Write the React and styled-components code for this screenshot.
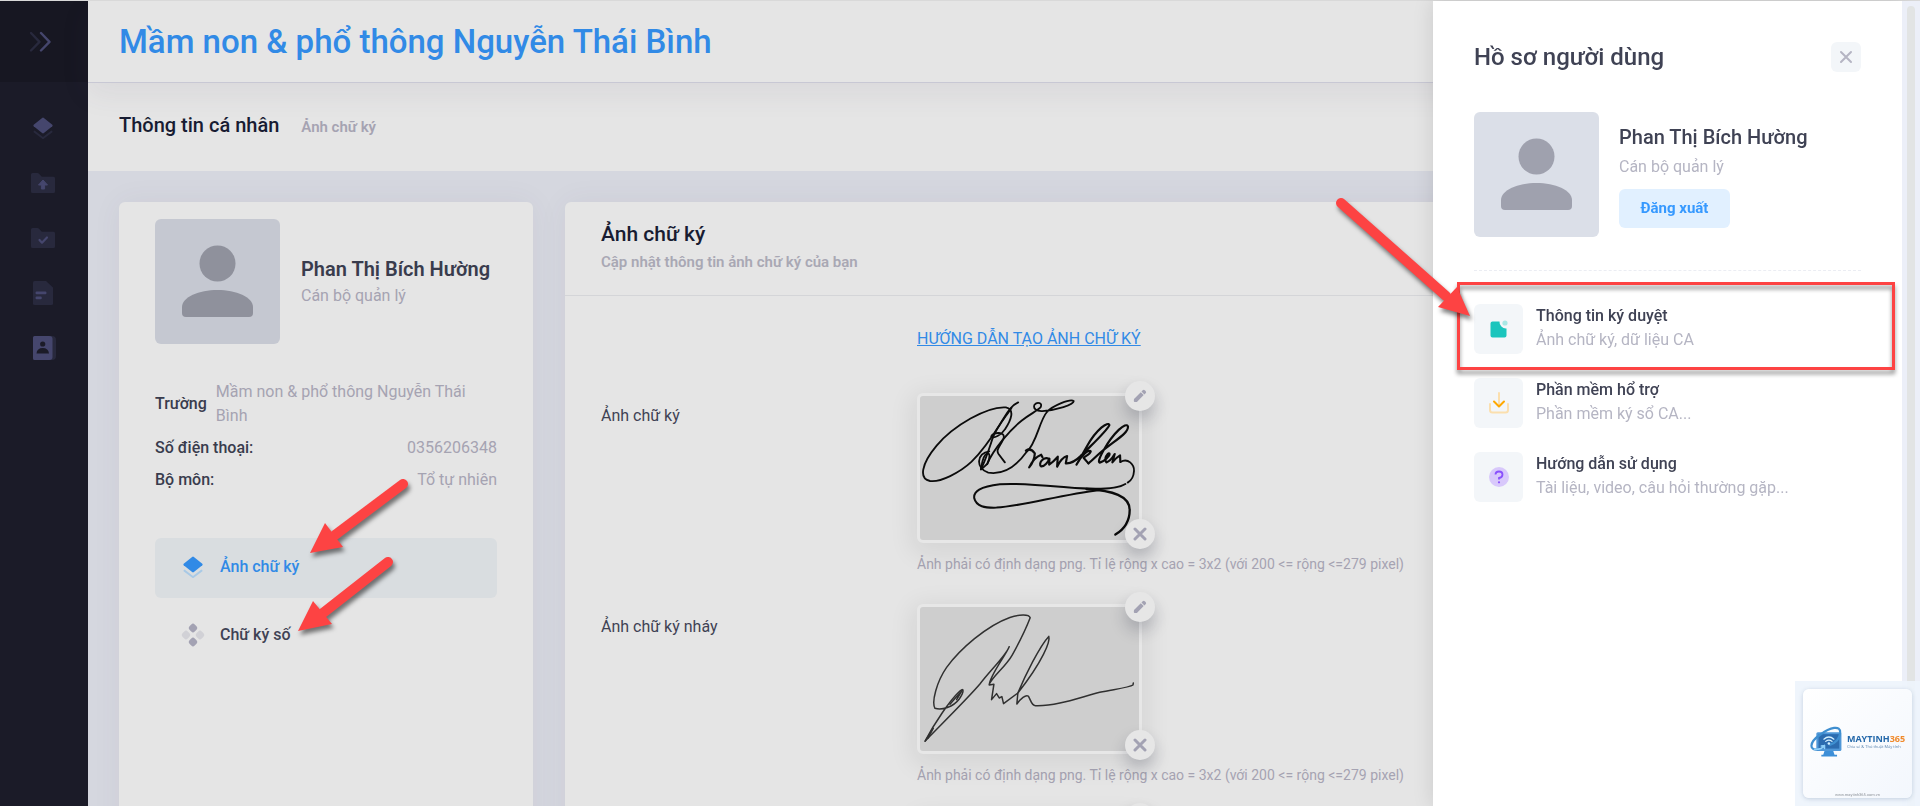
import React from "react";
import styled, { createGlobalStyle } from "styled-components";

const GlobalStyle = createGlobalStyle`
  *, *::before, *::after { box-sizing: border-box; }
  body {
    margin: 0;
    font-family: Roboto, "Liberation Sans", sans-serif;
    font-size: 16px;
    line-height: 24px;
    color: #3f4254;
    background: #d5d7df;
  }
  h1, h2, h3, p, dl, dd, ul { margin: 0; padding: 0; }
  button { border: 0; padding: 0; font: inherit; cursor: pointer; }
  a { color: inherit; text-decoration: none; }
  svg { display: block; }
`;

const Shell = styled.div`
  display: grid;
  grid-template-columns: 88px 1fr;
  height: 100vh;
  overflow: hidden;
  border-top: 1px solid #d9d9d9;
`;

/* Side bar */
const Rail = styled.aside`
  background: #1b1b28;
`;
const RailBrand = styled.div`
  display: flex;
  align-items: center;
  justify-content: center;
  height: 81px;
  background: #171722;
`;
const RailToggle = styled.button`
  padding-right: 8px;
  background: transparent;
`;
const RailNav = styled.nav`
  display: flex;
  flex-direction: column;
  padding: 18px 2px 0 0;
`;
const RailLink = styled.a`
  display: flex;
  align-items: center;
  justify-content: center;
  height: 55px;
`;

/* Main column */
const Main = styled.main`
  display: flex;
  flex-direction: column;
  min-width: 0;
`;
const TopBar = styled.header`
  position: relative;
  display: flex;
  align-items: center;
  flex: none;
  height: 82px;
  padding: 0 31px;
  background: #e5e5e5;
  border-bottom: 1px solid #c8c8d4;
  box-shadow: 0 10px 30px rgba(82, 63, 105, 0.08);
`;
const SchoolName = styled.h1`
  font-size: 33px;
  line-height: 40px;
  font-weight: 500;
  color: #318ae6;
`;
const SubBar = styled.div`
  display: flex;
  align-items: center;
  flex: none;
  gap: 22px;
  height: 88px;
  padding: 0 31px 4px;
  background: #e5e5e5;
`;
const PageTitle = styled.h2`
  font-size: 20px;
  font-weight: 500;
  color: #181c32;
`;
const Crumb = styled.a`
  padding-top: 3px;
  font-size: 15px;
  font-weight: 600;
  color: #a5a3b2;
`;
const Content = styled.div`
  display: flex;
  flex: 1;
  gap: 32px;
  min-height: 0;
  padding: 31px 31px 0;
`;
const Card = styled.section`
  flex: ${(p) => (p.$wide ? "1" : "0 0 414px")};
  background: #e5e5e5;
  border-radius: 6px 6px 0 0;
  box-shadow: 0 0 30px rgba(82, 63, 105, 0.06);
`;

/* Profile card */
const ProfileBody = styled.div`
  padding: 17px 36px;
`;
const PersonRow = styled.div`
  display: flex;
  align-items: center;
  gap: 21px;
`;
const PersonText = styled.div`
  padding-bottom: 2px;
`;
const AvatarBox = styled.div`
  flex: none;
  width: 125px;
  height: 125px;
  border-radius: 6px;
  background: ${(p) => (p.$dim ? "#c5c8d1" : "#dbdfe8")};
  color: ${(p) => (p.$dim ? "#8f919c" : "#9fa1ae")};
`;
const PersonName = styled.h3`
  font-size: 20px;
  line-height: 30px;
  font-weight: ${(p) => (p.$strong ? 600 : 500)};
  color: ${(p) => (p.$strong ? "#393c4d" : "#3f4254")};
`;
const Muted = styled.p`
  color: ${(p) => (p.$dim ? "#a5a3b2" : "#b5b5c3")};
`;
const Facts = styled.dl`
  display: flex;
  flex-direction: column;
  gap: 8px;
  padding-top: 36px;
`;
const Fact = styled.div`
  display: flex;
  align-items: center;
  justify-content: space-between;
  gap: 9px;
`;
const FactLabel = styled.dt`
  font-weight: 500;
  color: #393c4d;
`;
const FactValue = styled.dd`
  color: #a5a3b2;
`;
const Menu = styled.nav`
  display: flex;
  flex-direction: column;
  gap: 8px;
  padding-top: 46px;
`;
const MenuLink = styled.a`
  display: flex;
  align-items: center;
  gap: 14px;
  height: 60px;
  padding: 0 25px 2px;
  border-radius: 6px;
  font-weight: 500;
  background: ${(p) => (p.$active ? "#d9dde0" : "transparent")};
  color: ${(p) => (p.$active ? "#318ae6" : "#3f4254")};
`;

/* Signature card */
const CardHead = styled.header`
  padding: 16px 36px 20px;
  border-bottom: 1px solid #d4d5d8;
`;
const CardTitle = styled.h3`
  font-size: 21px;
  line-height: 32px;
  font-weight: 500;
  color: #181c32;
`;
const CardNote = styled.p`
  font-size: 15px;
  font-weight: 600;
  line-height: 25px;
  color: #a9a8b4;
`;
const Form = styled.div`
  display: flex;
  flex-direction: column;
  gap: 28px;
  padding: 31px 36px 0;
`;
const FormRow = styled.div`
  display: grid;
  grid-template-columns: 316px 1fr;
`;
const GuideLink = styled.a`
  grid-column: 2;
  margin-bottom: 14px;
  color: #318ae6;
  text-decoration: underline;
`;
const RowLabel = styled.span`
  padding-top: 11px;
`;
const SignBox = styled.div`
  position: relative;
  width: 225px;
  height: 150px;
  border: 3px solid #e7e7e7;
  border-radius: 6px;
  background: #cecece;
  box-shadow: 0 6px 24px 6px rgba(0, 0, 0, 0.07);
`;
const RoundButton = styled.button`
  position: absolute;
  right: -16px;
  ${(p) => (p.$low ? "bottom: -9px;" : "top: -15px;")}
  display: flex;
  align-items: center;
  justify-content: center;
  width: 30px;
  height: 30px;
  border-radius: 50%;
  background: #e6e6e6;
  color: #a3a2b3;
  box-shadow: 0 9px 16px rgba(24, 28, 50, 0.22);
`;
const Hint = styled.p`
  padding-top: 9px;
  font-size: 14px;
  color: #a5a3b2;
  white-space: nowrap;
`;

/* User drawer */
const Drawer = styled.aside`
  position: fixed;
  top: 1px;
  right: 18px;
  bottom: 0;
  width: 469px;
  padding: 41px 41px 0;
  background: #fff;
  box-shadow: 0 0 20px rgba(0, 0, 0, 0.12);
`;
const DrawerHead = styled.header`
  display: flex;
  align-items: center;
  justify-content: space-between;
  height: 30px;
`;
const DrawerTitle = styled.h2`
  font-size: 24px;
  line-height: 30px;
  font-weight: 500;
`;
const CloseButton = styled.button`
  display: flex;
  align-items: center;
  justify-content: center;
  width: 30px;
  height: 30px;
  border-radius: 6px;
  background: #f3f6f9;
  color: #b5b5c3;
`;
const DrawerPerson = styled(PersonRow)`
  gap: 20px;
  padding: 40px 0 33px;
  border-bottom: 1px dashed #ebedf3;
`;
const DrawerText = styled.div`
  display: flex;
  flex-direction: column;
  align-items: flex-start;
  gap: 3px;
`;
const LogoutButton = styled.button`
  width: 111px;
  height: 39px;
  margin-top: 7px;
  border-radius: 6px;
  font-size: 15px;
  font-weight: 700;
  background: #e1f0ff;
  color: #3699ff;
`;
const DrawerList = styled.ul`
  display: flex;
  flex-direction: column;
  gap: 24px;
  padding-top: 33px;
  list-style: none;
`;
const DrawerLink = styled.a`
  display: flex;
  align-items: center;
  gap: 13px;
  height: 50px;
`;
const Tile = styled.span`
  display: flex;
  align-items: center;
  justify-content: center;
  width: 49px;
  height: 50px;
  border-radius: 6px;
  background: #f3f6f9;
`;
const LinkText = styled.span`
  display: flex;
  flex-direction: column;
  padding-bottom: 2px;
`;
const LinkTitle = styled.span`
  font-weight: 500;
`;
const LinkSub = styled.span`
  color: #b5b5c3;
`;
const ScrollTrack = styled.div`
  position: fixed;
  top: 1px;
  right: 0;
  bottom: 0;
  width: 18px;
  padding: 5px 5px 0;
  background: #eceff8;
`;
const ScrollThumb = styled.div`
  width: 8px;
  height: 100%;
  border-radius: 4px 4px 0 0;
  background: #e2e4e4;
`;

/* Watermark and callouts */
const Watermark = styled.div`
  position: fixed;
  right: 0;
  bottom: 0;
  width: 125px;
  height: 125px;
  padding: 8px;
  background: rgba(238, 244, 252, 0.93);
`;
const WatermarkCard = styled.div`
  display: flex;
  flex-direction: column;
  align-items: center;
  justify-content: space-between;
  width: 109px;
  height: 109px;
  padding: 37px 6px 1px;
  border-radius: 6px;
  background: linear-gradient(135deg, #fff, #f3f7fd);
  box-shadow: 0 1px 4px rgba(60, 90, 130, 0.25);
`;
const LogoRow = styled.div`
  display: flex;
  align-items: center;
  gap: 3px;
`;
const LogoName = styled.div`
  font-family: "Open Sans", sans-serif;
  font-size: 9px;
  line-height: 10px;
  font-weight: 700;
  color: #2468aa;
  em { font-style: normal; color: #f08a2c; }
`;
const LogoTag = styled.div`
  font-family: "Open Sans", sans-serif;
  font-size: 4px;
  line-height: 6px;
  color: #5d86b0;
  white-space: nowrap;
`;
const LogoUrl = styled.div`
  font-size: 4px;
  line-height: 5px;
  color: #8d9299;
`;
const Highlight = styled.div`
  position: fixed;
  top: 282px;
  right: 25px;
  width: 438px;
  height: 88px;
  border: 3px solid #fd4343;
  filter: drop-shadow(0 4px 2px rgba(0, 0, 0, 0.45));
  pointer-events: none;
`;
const Callout = styled.svg`
  position: fixed;
  top: ${(p) => p.$top}px;
  ${(p) => (p.$right ? `right: ${p.$right}px;` : `left: ${p.$left}px;`)}
  overflow: visible;
  filter: drop-shadow(2px 4px 2px rgba(0, 0, 0, 0.5));
  pointer-events: none;
`;

const Avatar = ({ dim }) => (
  <AvatarBox $dim={dim}>
    <svg width="125" height="125" viewBox="0 0 125 125" fill="currentColor" aria-hidden="true">
      <circle cx="62.5" cy="44.5" r="18" />
      <path d="M27 88C27 78 44 71 62.500 71S98 78 98 88V94Q98 98 94 98H31Q27 98 27 94Z" />
    </svg>
  </AvatarBox>
);

const LayersIcon = ({ tone, soft, size }) => (
  <svg width={size} height={size} viewBox="0 0 24 24" fill={tone} aria-hidden="true">
    <path d="M11.200 2.700Q12 2.100 12.800 2.700L20.600 9Q21.300 9.700 20.600 10.400L12.800 16.700Q12 17.300 11.200 16.700L3.400 10.400Q2.700 9.700 3.400 9Z" />
    <path d="M3.300 15.100L4.300 14.200L12 20.200L19.700 14.200L20.700 15.100V15.900L12.700 22Q12 22.400 11.300 22L3.300 15.900Z" fill={soft} />
  </svg>
);

const FolderIcon = ({ children }) => (
  <svg width="26" height="22" viewBox="0 0 26 22" fill="none" aria-hidden="true">
    <path d="M2.500 1H7.500Q8.300 1 9 1.700L11.800 4.800H23.500Q25 4.800 25 6.300V19.500Q25 21 23.500 21H2.500Q1 21 1 19.500V2.500Q1 1 2.500 1Z" fill="#28293d" />
    {children}
  </svg>
);

const railItems = [
  { label: "Tổng quan", icon: <LayersIcon tone="#45466d" soft="#28293d" size={26} /> },
  {
    label: "Tải lên",
    icon: (
      <FolderIcon>
        <path d="M13 8L17.500 13H14.600V17H11.400V13H8.500Z" fill="#45466d" stroke="#45466d" strokeLinejoin="round" />
      </FolderIcon>
    ),
  },
  {
    label: "Đã duyệt",
    icon: (
      <FolderIcon>
        <path d="M9.500 13L12 15.700L17 10.500" stroke="#45466d" strokeWidth="2.200" strokeLinecap="round" strokeLinejoin="round" />
      </FolderIcon>
    ),
  },
  {
    label: "Văn bản",
    icon: (
      <svg width="20" height="26" viewBox="0 0 20 26" aria-hidden="true">
        <path d="M1.500 1H13L20 7.500V23.500Q20 25 18.500 25H1.500Q0 25 0 23.500V2.500Q0 1 1.500 1Z" fill="#28293d" />
        <rect x="2.500" y="11.500" width="11" height="2.800" rx="1.200" fill="#45466d" />
        <rect x="2.500" y="16.500" width="6.300" height="2.800" rx="1.200" fill="#45466d" />
      </svg>
    ),
  },
  {
    label: "Danh bạ",
    icon: (
      <svg width="26" height="26" viewBox="0 0 26 26" aria-hidden="true">
        <path d="M20 1H22Q26 1 26 5V21Q26 25 22 25H20Z" fill="#28293d" />
        <path d="M4.500 1H19.500Q22.500 1 22.500 4V22Q22.500 25 19.500 25H4.500Q3 25 3 23.500V2.500Q3 1 4.500 1Z" fill="#45466d" />
        <circle cx="12.700" cy="9" r="2.600" fill="#1b1b28" />
        <path d="M6.500 18.500Q7 13 12.700 13T19 18.500Z" fill="#1b1b28" />
      </svg>
    ),
  },
];

const DotsIcon = () => (
  <svg width="26" height="26" viewBox="-1 -1 26 26" fill="#a3a2b3" aria-hidden="true">
    <rect x="8.300" y="1.300" width="7.400" height="7.400" rx="2.400" transform="rotate(45 12 5)" />
    <rect x="8.300" y="15.300" width="7.400" height="7.400" rx="2.400" transform="rotate(45 12 19)" />
    <rect x="1.300" y="8.300" width="7.400" height="7.400" rx="2.400" transform="rotate(45 5 12)" opacity=".3" />
    <rect x="15.300" y="8.300" width="7.400" height="7.400" rx="2.400" transform="rotate(45 19 12)" opacity=".3" />
  </svg>
);

const PencilIcon = () => (
  <svg width="14" height="14" viewBox="0 0 14 14" fill="currentColor" aria-hidden="true">
    <path d="M1 10L7.800 3.200L10.700 6.100L3.900 12.900H1.800Q.8 12.900.8 12ZM8.500 2.500L9.700 1.300Q10.800.3 12 1.400L12.600 2Q13.700 3.200 12.600 4.300L11.400 5.400Z" />
  </svg>
);

const CrossIcon = ({ size, weight }) => (
  <svg width={size} height={size} viewBox="0 0 14 14" stroke="currentColor" strokeWidth={weight} strokeLinecap="round" aria-hidden="true">
    <path d="M2 2L12 12M12 2L2 12" />
  </svg>
);

const FranklinSignature = () => (
  <svg width="219" height="144" viewBox="60 78 658 432" fill="none" stroke="#0b0b0b" strokeLinecap="round" strokeLinejoin="round" role="img" aria-label="Ảnh chữ ký">
    <g strokeWidth="5.500">
      <path d="M355 97C330 108 320 132 300 163C278 198 250 240 215 275C180 308 120 338 90 333C56 326 64 282 110 227C160 167 262 108 318 112C346 118 334 150 315 178C305 195 280 207 274 199C280 186 318 183 311 205C303 227 286 238 296 252L315 277" />
      <path d="M335 113C322 135 290 170 278 205C268 235 258 268 243 298" />
      <path d="M262 282C280 238 330 180 365 152C390 132 410 124 422 112C430 98 412 94 404 104C399 116 410 124 428 123C470 120 522 104 522 93C512 84 458 108 442 125C418 152 410 222 380 246C352 285 315 316 265 308C226 296 230 248 268 244" />
      <path d="M243 298C250 294 255 288 262 282C272 262 270 248 262 250C248 255 246 282 243 298" />
    </g>
    <g strokeWidth="6.500">
      <path d="M378 242Q392 232 405 250Q404 272 388 292Q402 262 424 254L428 262" />
      <path d="M447 266C430 258 414 282 424 289C434 290 446 274 449 266L448 284Q460 276 474 260L472 290Q486 262 502 258L498 280Q518 282 545 256" />
      <path d="M545 256C575 225 622 182 629 165C626 152 590 178 562 228L530 284C545 256 568 236 573 244C570 256 554 258 552 264L566 280" />
      <path d="M566 280C582 268 592 256 604 246C650 208 685 190 685 170C680 152 640 190 612 240Q592 276 600 278Q610 276 622 264C634 254 630 246 624 252Q612 266 620 277Q632 274 645 252L638 277Q650 262 661 256L662 276" />
    </g>
    <path d="M662 276C685 262 704 284 703 303C702 320 694 332 684 338" strokeWidth="5.500" />
    <path d="M677 342C645 362 570 358 500 352C420 345 350 338 300 343C240 350 220 365 223 385C229 410 255 414 290 413C370 408 480 375 600 360" strokeWidth="6" />
    <path d="M560 357C640 362 690 378 690 420C690 455 670 480 647 494" strokeWidth="7" />
  </svg>
);

const InitialsSignature = () => (
  <svg width="219" height="144" viewBox="60 84 658 432" fill="none" stroke="#303030" strokeWidth="4.500" strokeLinecap="round" strokeLinejoin="round" role="img" aria-label="Ảnh chữ ký nháy">
    <path d="M268 316C278 292 318 262 337 228C356 194 378 150 391 116C388 105 360 105 330 115C260 140 180 210 140 265C110 308 94 370 105 388C125 395 160 384 178 360C196 334 190 324 176 340C150 365 105 430 75 487C110 450 200 362 240 315C270 275 318 230 328 203C318 228 268 292 268 318L282 316L275 362L290 344L298 357L306 353L311 374L354 342" />
    <path d="M354 342C375 292 420 200 447 172C452 186 430 245 354 342L351 375C362 360 378 345 386 352C393 364 395 380 407 380C472 382 540 355 600 340C650 330 690 325 700 318L701 312" />
    <path d="M76 486L100 448L84 478M150 376L188 332L170 362" />
  </svg>
);

const hint = "Ảnh phải có định dạng png. Tỉ lệ rộng x cao = 3x2 (với 200 <= rộng <=279 pixel)";

const signatures = [
  { id: "full", label: "Ảnh chữ ký", drawing: <FranklinSignature />, hint },
  { id: "short", label: "Ảnh chữ ký nháy", drawing: <InitialsSignature />, hint },
  { id: "extra" },
];

const drawerItems = [
  {
    title: "Thông tin ký duyệt",
    sub: "Ảnh chữ ký, dữ liệu CA",
    icon: (
      <svg width="24" height="24" viewBox="0 0 24 24" aria-hidden="true">
        <path d="M5.500 4.500H12.500A6.500 6.500 0 0 0 19.500 11.500V18.500Q19.500 20.500 17.500 20.500H5.500Q3.500 20.500 3.500 18.500V6.500Q3.500 4.500 5.500 4.500Z" fill="#1bc5bd" />
        <circle cx="18" cy="6" r="2.600" fill="#a9e8e5" />
      </svg>
    ),
  },
  {
    title: "Phần mềm hổ trợ",
    sub: "Phần mềm ký sổ CA...",
    icon: (
      <svg width="24" height="24" viewBox="0 0 24 24" fill="none" strokeWidth="2" strokeLinecap="round" strokeLinejoin="round" aria-hidden="true">
        <path d="M12 2V14M3 13V19Q3 21.500 5.500 21.500H18.500Q21 21.500 21 19V13" stroke="#fbdfae" />
        <path d="M7 10.500L12 15.500L17 10.500" stroke="#ffa800" />
      </svg>
    ),
  },
  {
    title: "Hướng dẫn sử dụng",
    sub: "Tài liệu, video, câu hỏi thường gặp...",
    icon: (
      <svg width="24" height="24" viewBox="0 0 24 24" fill="none" aria-hidden="true">
        <circle cx="12" cy="12" r="10" fill="#d8c8fb" />
        <path d="M8.500 9.500Q8.500 6.500 12 6.500T15.500 9.500T12 13V14.500" stroke="#8950fc" strokeWidth="1.800" />
        <circle cx="12" cy="17.300" r="1.100" fill="#8950fc" />
      </svg>
    ),
  },
];

const Arrow = ({ width, height, points, shaft, ...place }) => (
  <Callout width={width} height={height} aria-hidden="true" {...place}>
    <path d={shaft} stroke="#fd4343" strokeWidth="10" strokeLinecap="round" />
    <polygon points={points} fill="#fd4343" />
  </Callout>
);

export default function App() {
  return (
    <>
      <GlobalStyle />
      <Shell>
        <Rail>
          <RailBrand>
            <RailToggle aria-label="Mở rộng menu">
              <svg width="22" height="22" viewBox="0 0 22 22" fill="none" strokeWidth="2.400" strokeLinecap="round" strokeLinejoin="round" aria-hidden="true">
                <path d="M2 2L10.500 10.800L2 19.500" stroke="#28293d" />
                <path d="M12 2L20.500 10.800L12 19.500" stroke="#45466d" />
              </svg>
            </RailToggle>
          </RailBrand>
          <RailNav>
            {railItems.map((item) => (
              <RailLink key={item.label} href="#" aria-label={item.label}>{item.icon}</RailLink>
            ))}
          </RailNav>
        </Rail>

        <Main>
          <TopBar>
            <SchoolName>Mầm non &amp; phổ thông Nguyễn Thái Bình</SchoolName>
          </TopBar>
          <SubBar>
            <PageTitle>Thông tin cá nhân</PageTitle>
            <Crumb href="#">Ảnh chữ ký</Crumb>
          </SubBar>
          <Content>
            <Card>
              <ProfileBody>
                <PersonRow>
                  <Avatar dim />
                  <PersonText>
                    <PersonName $strong>Phan Thị Bích Hường</PersonName>
                    <Muted $dim>Cán bộ quản lý</Muted>
                  </PersonText>
                </PersonRow>
                <Facts>
                  <Fact>
                    <FactLabel>Trường</FactLabel>
                    <FactValue>Mầm non &amp; phổ thông Nguyễn Thái Bình</FactValue>
                  </Fact>
                  <Fact>
                    <FactLabel>Số điện thoại:</FactLabel>
                    <FactValue>0356206348</FactValue>
                  </Fact>
                  <Fact>
                    <FactLabel>Bộ môn:</FactLabel>
                    <FactValue>Tổ tự nhiên</FactValue>
                  </Fact>
                </Facts>
                <Menu>
                  <MenuLink href="#" $active>
                    <LayersIcon tone="#318ae6" soft="#a8c9e6" size={26} />
                    Ảnh chữ ký
                  </MenuLink>
                  <MenuLink href="#">
                    <DotsIcon />
                    Chữ ký số
                  </MenuLink>
                </Menu>
              </ProfileBody>
            </Card>

            <Card $wide>
              <CardHead>
                <CardTitle>Ảnh chữ ký</CardTitle>
                <CardNote>Cập nhật thông tin ảnh chữ ký của bạn</CardNote>
              </CardHead>
              <Form>
                <FormRow>
                  <GuideLink href="#">HƯỚNG DẪN TẠO ẢNH CHỮ KÝ</GuideLink>
                </FormRow>
                {signatures.map((item) => (
                  <FormRow key={item.id}>
                    <RowLabel>{item.label}</RowLabel>
                    <div>
                      <SignBox>
                        {item.drawing}
                        <RoundButton aria-label="Sửa ảnh"><PencilIcon /></RoundButton>
                        <RoundButton $low aria-label="Xóa ảnh"><CrossIcon size={14} weight={3} /></RoundButton>
                      </SignBox>
                      {item.hint && <Hint>{item.hint}</Hint>}
                    </div>
                  </FormRow>
                ))}
              </Form>
            </Card>
          </Content>
        </Main>
      </Shell>

      <Drawer>
        <DrawerHead>
          <DrawerTitle>Hồ sơ người dùng</DrawerTitle>
          <CloseButton aria-label="Đóng"><CrossIcon size={14} weight={2} /></CloseButton>
        </DrawerHead>
        <DrawerPerson>
          <Avatar />
          <DrawerText>
            <PersonName>Phan Thị Bích Hường</PersonName>
            <Muted>Cán bộ quản lý</Muted>
            <LogoutButton>Đăng xuất</LogoutButton>
          </DrawerText>
        </DrawerPerson>
        <DrawerList>
          {drawerItems.map((item) => (
            <li key={item.title}>
              <DrawerLink href="#">
                <Tile>{item.icon}</Tile>
                <LinkText>
                  <LinkTitle>{item.title}</LinkTitle>
                  <LinkSub>{item.sub}</LinkSub>
                </LinkText>
              </DrawerLink>
            </li>
          ))}
        </DrawerList>
      </Drawer>
      <ScrollTrack><ScrollThumb /></ScrollTrack>

      <Watermark>
        <WatermarkCard>
          <LogoRow>
            <svg width="34" height="32" viewBox="0 0 108 102" fill="none" aria-hidden="true">
              <rect x="20" y="20" width="80" height="60" rx="5" fill="#4f97d8" />
              <rect x="27" y="26" width="66" height="46" fill="#2c6cb0" />
              <path d="M46 80H74L78 92H86V97H36V92H42Z" fill="#3d8fd8" />
              <path d="M30 74C-5 82 -4 52 32 28C64 4 98 -4 96 22C94 42 80 54 64 60" stroke="#3f8fd0" strokeWidth="7" strokeLinecap="round" />
              <path d="M44 42Q60 28 76 42M50 49Q60 41 70 49" stroke="#d6f1ff" strokeWidth="4" strokeLinecap="round" />
              <circle cx="60" cy="56" r="4" fill="#d6f1ff" />
              <path d="M14 74Q36 76 46 62M46 62L36 64M46 62V72" stroke="#8fd0fa" strokeWidth="5" strokeLinecap="round" />
            </svg>
            <div>
              <LogoName>MAYTINH<em>365</em></LogoName>
              <LogoTag>Chia sẻ &amp; Thủ thuật Máy tính</LogoTag>
            </div>
          </LogoRow>
          <LogoUrl>www.maytinh365.com.vn</LogoUrl>
        </WatermarkCard>
      </Watermark>

      <Highlight />
      <Arrow $left={310} $top={479} width="98" height="76" shaft="M93 5L25 56" points="0,74 15,44 33,68" />
      <Arrow $left={298} $top={556} width="95" height="76" shaft="M90 6L25 57" points="0,75 15,45 34,68" />
      <Arrow $right={450} $top={198} width="134" height="120" shaft="M5 5L110 98" points="134,118 102,109 121,89" />
    </>
  );
}
